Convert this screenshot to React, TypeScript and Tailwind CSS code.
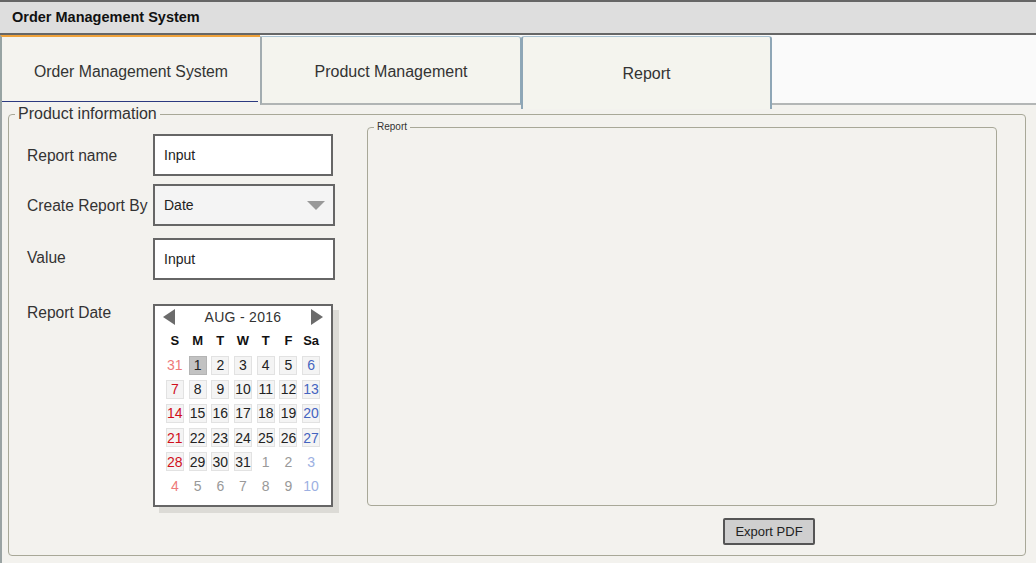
import React from 'react';

const font = { fontFamily: '"Liberation Sans", Arial, sans-serif' };

type Day = { n: number; kind: 'prev' | 'cur' | 'next'; sel?: boolean };

const buildDays = (): Day[] => {
  const days: Day[] = [{ n: 31, kind: 'prev' }];
  for (let i = 1; i <= 31; i++) days.push({ n: i, kind: 'cur', sel: i === 1 });
  for (let i = 1; i <= 10; i++) days.push({ n: i, kind: 'next' });
  return days;
};

const dayColor = (d: Day, col: number) => {
  if (d.kind === 'cur') {
    if (col === 0) return 'text-[#d0101c]';
    if (col === 6) return 'text-[#4464c0]';
    return 'text-[#222]';
  }
  if (col === 0) return 'text-[#ee7a7a]';
  if (col === 6) return 'text-[#9cb0e2]';
  return 'text-[#999]';
};

// Small date picker
const Calendar: React.FC = () => {
  const days = buildDays();
  return (
    <div className="relative w-[180px]">
      <div className="absolute left-[6px] top-[6px] w-[180px] h-[203px] bg-[#dcdbd6]" />
      <div className="relative w-[180px] h-[203px] bg-white border-2 border-[#666] flex flex-col items-center">
        <div className="mt-[2px] h-[18px] w-[160px] flex items-center justify-between">
          <svg width="12" height="16" viewBox="0 0 12 16">
            <path d="M12 0 L0 8 L12 16 Z" fill="#6b6b6b" />
          </svg>
          <span className="text-[14px] text-[#333] tracking-[0.3px]">AUG - 2016</span>
          <svg width="12" height="16" viewBox="0 0 12 16">
            <path d="M0 0 L12 8 L0 16 Z" fill="#6b6b6b" />
          </svg>
        </div>
        <div className="mt-[3px] w-[159px] grid grid-cols-7 h-[24px] items-center text-[13px] font-bold text-[#111]">
          {['S', 'M', 'T', 'W', 'T', 'F', 'Sa'].map((d, i) => (
            <div key={i} className="text-center">{d}</div>
          ))}
        </div>
        <div className="w-[159px] grid grid-cols-7">
          {days.map((d, i) => {
            const col = i % 7;
            const boxed = d.kind === 'cur';
            return (
              <div key={i} className="h-[24.2px] flex items-center justify-center">
                <div
                  className={`w-[18px] h-[19px] flex items-center justify-center text-[14px] leading-none ${dayColor(d, col)} ${
                    d.sel
                      ? 'bg-[#c2c2c2] border border-[#b4b4b4]'
                      : boxed
                      ? 'bg-[#f4f4f4] border border-[#e2e2e2]'
                      : ''
                  }`}
                >
                  {d.n}
                </div>
              </div>
            );
          })}
        </div>
      </div>
    </div>
  );
};

const Label: React.FC<{ children: React.ReactNode; className?: string }> = ({ children, className = '' }) => (
  <div className={`w-[126px] text-[15.6px] text-[#333] ${className}`}>{children}</div>
);

export default function App() {
  return (
    <div className="w-[1036px] h-[563px] overflow-hidden bg-[#f3f2ee] flex flex-col" style={font}>
      {/* title bar */}
      <div className="h-[35px] bg-[#dedede] border-t-2 border-b-2 border-[#666] flex items-center px-3 pt-[1px]">
        <span className="text-[14.5px] font-bold text-[#111]">Order Management System</span>
      </div>

      {/* tabs */}
      <div className="h-[70px] flex items-stretch bg-[#fafafa]">
        <div className="w-[260px] bg-[#f4f3ef] border-t-2 border-[#f0a23a] border-l-2 border-l-[#97a3a3] flex flex-col">
          <div className="flex-1 flex items-center justify-center pt-[5px] text-[15.8px] text-[#333]">
            Order Management System
          </div>
          <div className="h-[1px] bg-[#2c3a80] mr-[2px]" />
          <div className="h-[3px]" />
        </div>
        <div className="w-[261px] mt-[1px] bg-[#f4f4ee] border-l-2 border-l-[#a2acb0] border-t border-t-[#a9c2d2] border-r border-r-[#8ea8b8] border-b-2 border-b-[#b0b4b4] rounded-tr-[3px] flex items-center justify-center pt-[4px] text-[16px] text-[#333]">
          Product Management
        </div>
        <div className="relative z-10 w-[251px] h-[73px] mt-[1px] bg-[#f4f4ee] border-l-2 border-l-[#8ea6b6] border-t border-t-[#a9c2d2] border-r-2 border-r-[#8ea6b6] rounded-t-[3px] flex items-start justify-center pt-[25px] text-[16px] text-[#333]">
          Report
        </div>
        <div className="flex-1 border-b-2 border-b-[#b3b6b6]" />
      </div>

      {/* content */}
      <div className="flex-1 border-l-2 border-[#9aa3a3] pl-[6px] pr-[10px]">
        <fieldset className="border border-[#a8a898] rounded-[4px] pb-[10px]">
          <legend className="ml-[6px] px-[3px] text-[16px] leading-[18px] text-[#333]">Product information</legend>
          <div className="flex pl-[18px]">
            <div className="w-[340px] pt-[11px] flex flex-col">
              <div className="flex items-center h-[42px]">
                <Label className="pt-[2px]">Report name</Label>
                <div className="w-[180px] h-[42px] bg-white border-2 border-[#666] flex items-center pl-[9px] text-[14px] text-[#222]">
                  Input
                </div>
              </div>
              <div className="flex items-center h-[42px] mt-[8px]">
                <Label className="pt-[2px]">Create Report By</Label>
                <div className="w-[182px] h-[42px] bg-[#f4f4f4] border-2 border-[#666] flex items-center justify-between pl-[9px] pr-[8px] text-[14px] text-[#222]">
                  <span>Date</span>
                  <svg width="18" height="9" viewBox="0 0 18 9">
                    <path d="M0 0 H18 L9 9 Z" fill="#999" />
                  </svg>
                </div>
              </div>
              <div className="flex items-start h-[42px] mt-[12px]">
                <Label className="pt-[8px]">Value</Label>
                <div className="w-[182px] h-[42px] bg-white border-2 border-[#666] flex items-center pl-[9px] text-[14px] text-[#222]">
                  Input
                </div>
              </div>
              <div className="flex items-start mt-[24px]">
                <Label className="-mt-[3px]">Report Date</Label>
                <Calendar />
              </div>
            </div>
            <div className="w-[630px] -mt-[2px] flex flex-col">
              <fieldset className="h-[385px] border border-[#a8a898] rounded-[4px]">
                <legend className="ml-[6px] px-[3px] text-[10px] leading-[12px] text-[#333]">Report</legend>
              </fieldset>
              <div className="mt-[12px] pl-[356px]">
                <div className="w-[92px] h-[27px] bg-[#cfcfcf] border-2 border-[#555] rounded-[2px] flex items-center justify-center text-[13px] text-[#222]">
                  Export PDF
                </div>
              </div>
            </div>
          </div>
        </fieldset>
      </div>
    </div>
  );
}
